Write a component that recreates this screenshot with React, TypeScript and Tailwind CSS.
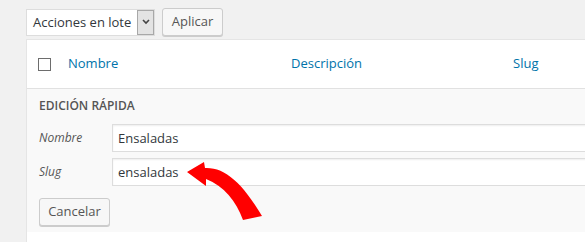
import * as React from "react"

const font = { fontFamily: '"Open Sans", "Noto Sans", sans-serif' }

function Arrow() {
  return (
    <svg className="absolute left-0 top-0 pointer-events-none" width="585" height="242" viewBox="0 0 585 242">
      <path
        d="M187,172 L204,162 L205,168 C224,167 242,182 262,216 L243,220 C236,201 224,186 206,179 L206,186 Z"
        fill="#ff0000"
      />
    </svg>
  )
}

export default function App() {
  return (
    <div className="relative w-[585px] h-[242px] overflow-hidden bg-[#f1f1f1] text-[13px] text-[#32373c] whitespace-nowrap" style={font}>
      {/* bulk actions */}
      <div className="flex items-center gap-[7px] pl-[26px] pt-[8px] h-[36px]">
        <div className="flex h-[27px] w-[129px] border border-[#dddddd] bg-white">
          <span className="flex-1 pl-[6px] leading-[25px] text-[13px] text-[#32373c]">Acciones en lote</span>
          <span className="flex w-[17px] items-center justify-center border border-[#a8a8a8] bg-[#e3e3e3]">
            <svg width="8" height="6" viewBox="0 0 8 6">
              <path d="M1,1 L4,4 L7,1" stroke="#444" strokeWidth="1.6" fill="none" />
            </svg>
          </span>
        </div>
        <button className="h-[28px] w-[61px] rounded-[3px] border border-[#cccccc] bg-[#f7f7f7] text-[13px] text-[#555555] shadow-[0_1px_0_#cccccc]">
          Aplicar
        </button>
      </div>

      {/* table */}
      <div className="ml-[26px] mt-[3px] w-[600px] border-l border-t border-[#e5e5e5] bg-white">
        <div className="flex h-[49px] items-center border-b border-[#e1e1e1] text-[13px] text-[#0073aa]">
          <span className="ml-[11px] h-[13px] w-[13px] border border-[#6d6d6d] bg-white" />
          <span className="ml-[17px] w-[223px]">Nombre</span>
          <span className="w-[222px]">Descripción</span>
          <span>Slug</span>
        </div>

        <div className="bg-[#f9f9f9] pl-[12px] pt-[7px] pb-[6px]">
          <div className="font-semibold text-[12px] uppercase text-[#555555] leading-[20px]">Edición rápida</div>
          <div className="mt-[8px] flex items-center">
            <span className="w-[73px] italic text-[12px] text-[#555555]">Nombre</span>
            <div className="h-[28px] w-[500px] border border-[#dddddd] bg-white pl-[5px] text-[13px] leading-[26px] text-[#32373c] shadow-[inset_0_1px_2px_rgba(0,0,0,0.07)]">
              Ensaladas
            </div>
          </div>
          <div className="mt-[6px] flex items-center">
            <span className="w-[73px] italic text-[12px] text-[#555555]">Slug</span>
            <div className="h-[28px] w-[500px] border border-[#dddddd] bg-white pl-[5px] text-[13px] leading-[26px] text-[#32373c] shadow-[inset_0_1px_2px_rgba(0,0,0,0.07)]">
              ensaladas
            </div>
          </div>
          <div className="mt-[12px] flex">
            <button className="h-[28px] w-[71px] rounded-[3px] border border-[#cccccc] bg-[#f7f7f7] text-[13px] text-[#555555] shadow-[0_1px_0_#cccccc]">
              Cancelar
            </button>
          </div>
        </div>
        <div className="h-[20px] bg-white" />
      </div>

      <Arrow />
    </div>
  )
}
